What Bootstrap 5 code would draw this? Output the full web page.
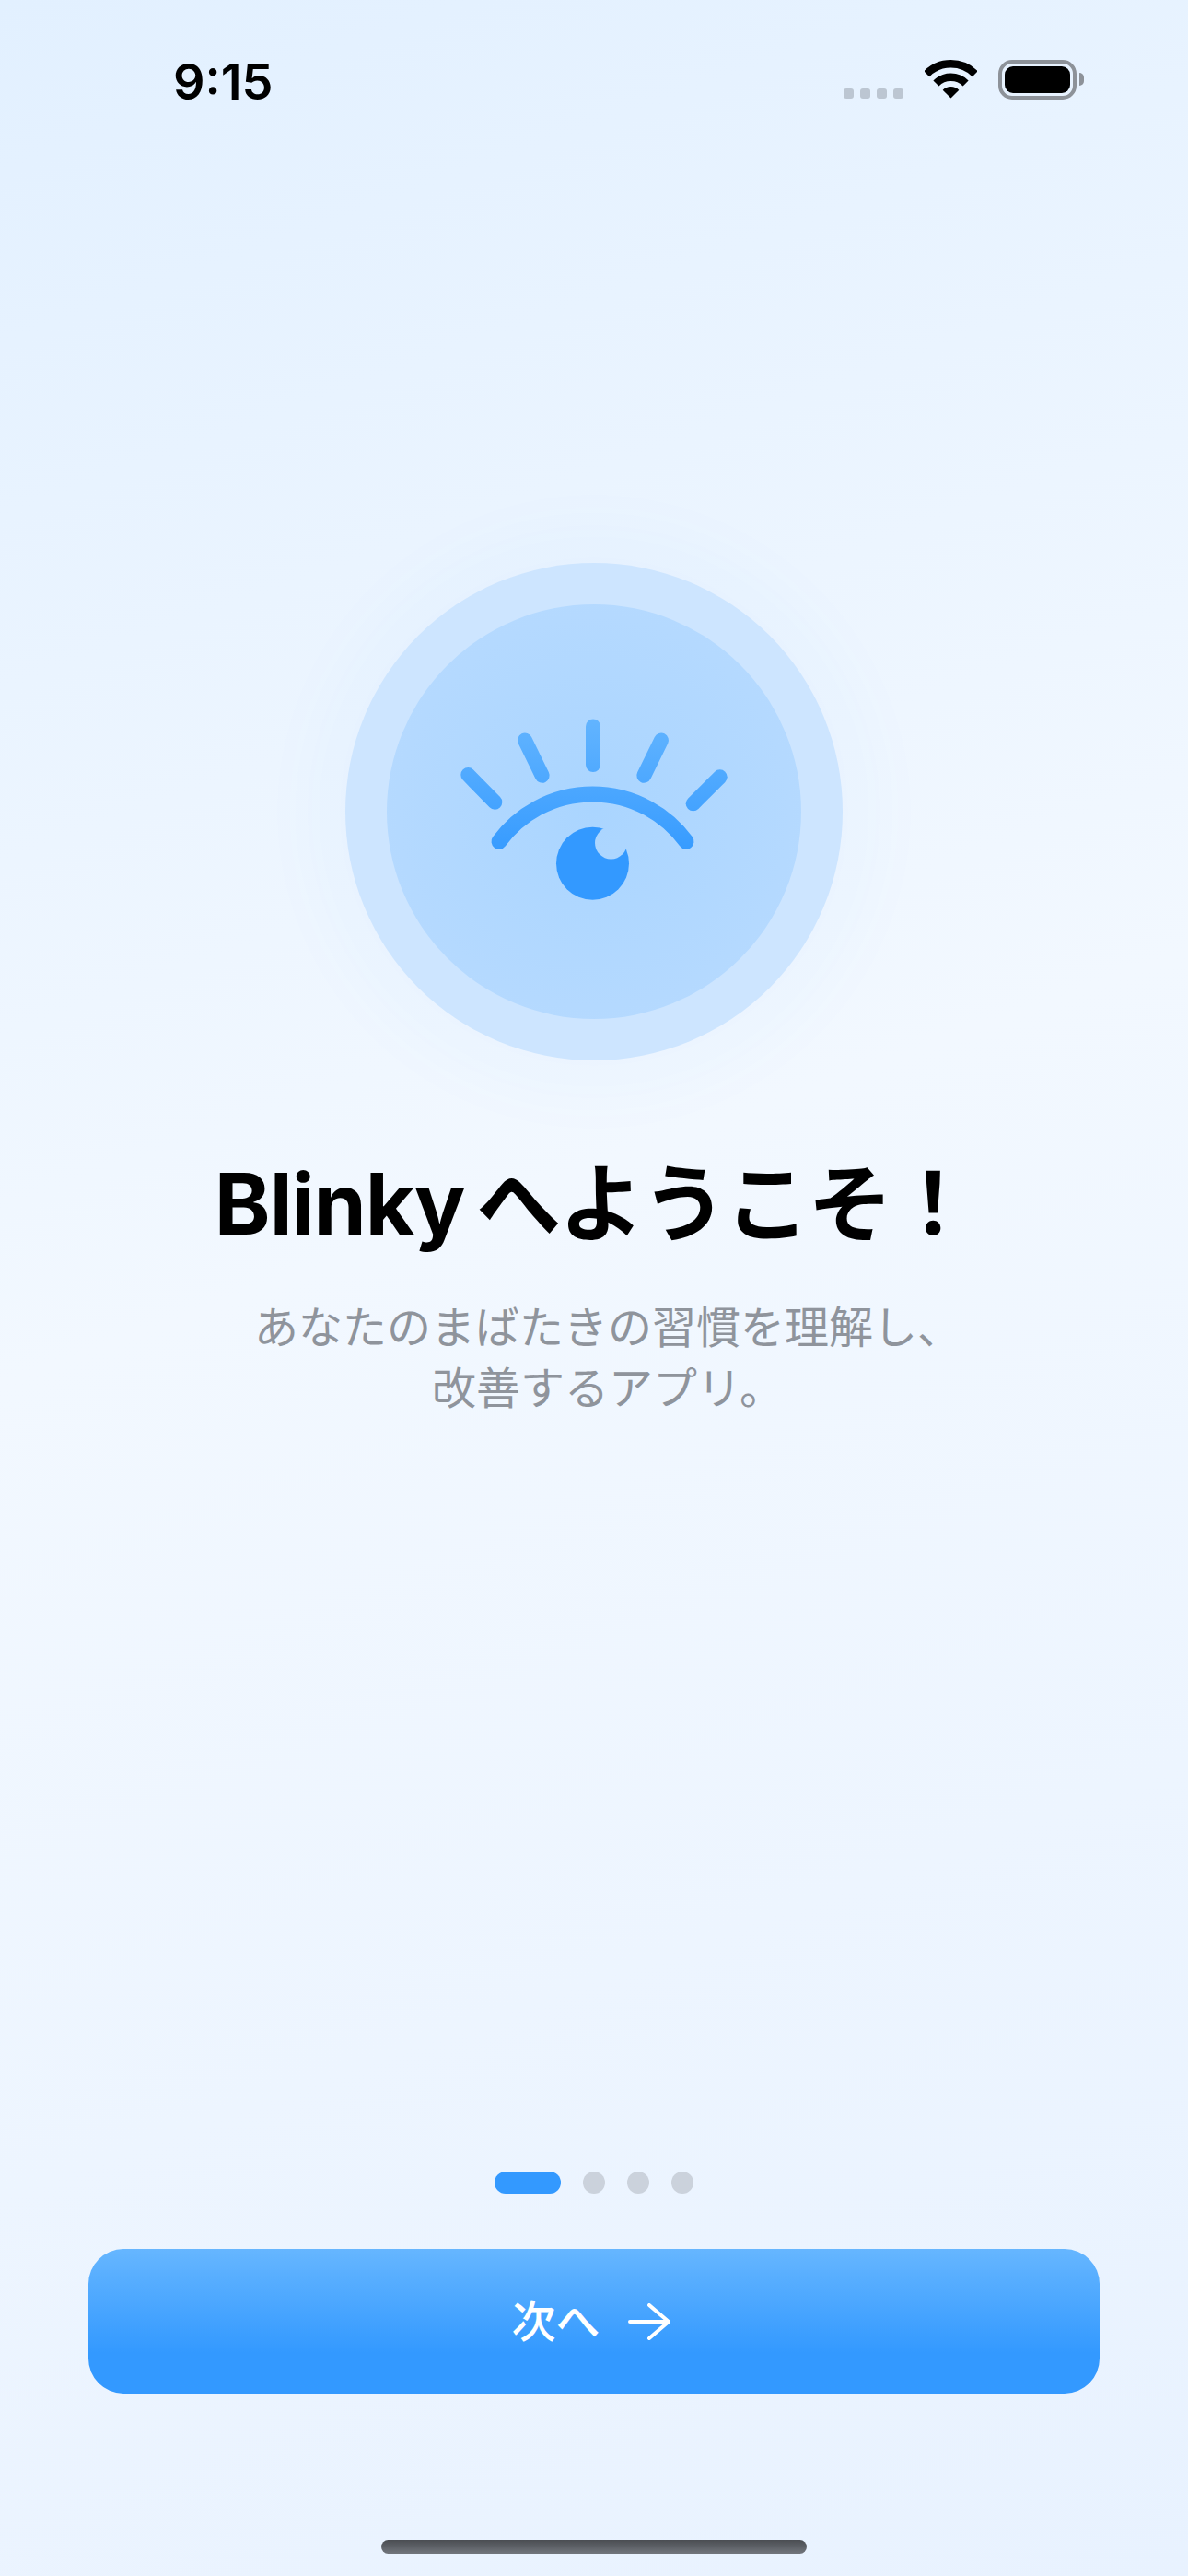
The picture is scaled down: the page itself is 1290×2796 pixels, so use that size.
<!DOCTYPE html>
<html lang="ja">
  <head>
    <meta charset="UTF-8" />
    <meta name="viewport" content="width=device-width, initial-scale=1.0" />
    <title>Blinky</title>
    <link
      href="https://cdn.jsdelivr.net/npm/bootstrap@5.3.1/dist/css/bootstrap.min.css"
      rel="stylesheet"
    />
    <style>
      body {
        font-family: Inter, "Noto Sans CJK JP", sans-serif;
        background: #eef5ff;
      }
      .screen {
        height: 2796px;
        background: linear-gradient(160deg, #e2f0ff 0%, #f2f8ff 46%, #e8f2ff 100%);
      }
      .status-row {
        height: 130px;
        padding: 67px 113px 0 188px;
      }
      .clock {
        font-size: 54px;
        font-weight: 600;
        line-height: 44px;
        color: #000;
      }
      .signal-dots {
        gap: 7px;
        margin-right: 23px;
        padding-top: 29px;
      }
      .signal-dots span {
        width: 11px;
        height: 11px;
        border-radius: 3px;
        background: #bcc6d2;
      }
      .wifi-icon {
        margin-top: -2px;
      }
      .battery {
        width: 85px;
        height: 43px;
        margin: -2px 0 0 23px;
        padding: 3px;
        border: 4px solid #8d9299;
        border-radius: 15px;
      }
      .battery-fill {
        background: #000;
        border-radius: 9px;
      }
      .battery-nub {
        width: 5px;
        height: 14px;
        margin: 12px 0 0 3px;
        background: #8d9299;
        border-radius: 0 5px 5px 0;
      }
      .halo {
        width: 540px;
        height: 540px;
        margin-top: 481px;
        background: #cde5ff;
        box-shadow: 0 0 90px 20px rgba(51, 153, 255, 0.04);
      }
      .halo-inner {
        width: 450px;
        height: 450px;
        background: radial-gradient(circle at 50% 50%, #aad5ff 0%, #b9dbff 100%);
      }
      .hero-title {
        margin: 94px 0 0;
        font-size: 92px;
        line-height: 124px;
        font-weight: 700;
        letter-spacing: -1px;
        word-spacing: -8px;
        color: #000;
      }
      .hero-title-ja {
        letter-spacing: -2px;
      }
      .hero-sub {
        margin: 39px 0 0;
        padding-left: 30px;
        font-size: 48px;
        line-height: 66px;
        font-weight: 400;
        color: #8f949c;
      }
      .pager {
        gap: 24px;
      }
      .pager span {
        width: 24px;
        height: 24px;
        border-radius: 12px;
        background: #cbd2dc;
      }
      .pager .pager-on {
        width: 72px;
        background: #3399ff;
      }
      .next-btn {
        width: 1098px;
        height: 157px;
        margin-top: 60px;
        padding: 0 6px 0 0;
        gap: 30px;
        border: 0;
        border-radius: 38px;
        font-size: 48px;
        font-weight: 500;
        color: #fff;
        background: linear-gradient(180deg, #66b6ff 0%, #3399ff 72%);
      }
      .home-bar {
        width: 462px;
        height: 15px;
        margin: 159px 0 24px;
        border-radius: 8px;
        background: linear-gradient(180deg, #4a4d52, #72767d);
      }
    </style>
  </head>
  <body class="m-0">
    <div class="screen d-flex flex-column align-items-center">
      <div class="status-row d-flex w-100 align-items-start">
        <div class="clock flex-grow-1">9:15</div>
        <div class="signal-dots d-flex">
          <span></span><span></span><span></span><span></span>
        </div>
        <svg class="wifi-icon" width="57" height="42" viewBox="0 0 57 42" fill="none" stroke="#000" stroke-width="8.5">
          <path d="M2.2 15.2A37.25 37.25 0 0 1 54.8 15.2" />
          <path d="M12.4 25.4A22.75 22.75 0 0 1 44.6 25.4" />
          <path d="M28.5 41.5L19.7 32.7A12.5 12.5 0 0 1 37.3 32.7Z" fill="#000" stroke="none" />
        </svg>
        <div class="battery d-flex">
          <div class="battery-fill flex-grow-1"></div>
        </div>
        <div class="battery-nub"></div>
      </div>

      <div class="halo rounded-circle d-flex align-items-center justify-content-center">
        <div class="halo-inner rounded-circle">
          <svg width="450" height="450" viewBox="0 0 450 450" fill="none">
            <defs>
              <linearGradient id="eyeGrad" gradientUnits="userSpaceOnUse" x1="0" y1="125" x2="0" y2="280">
                <stop offset="0" stop-color="#62b4ff" />
                <stop offset="1" stop-color="#3399ff" />
              </linearGradient>
              <mask id="pupilCut" maskUnits="userSpaceOnUse" x="0" y="0" width="450" height="450">
                <rect width="450" height="450" fill="#fff" />
                <circle cx="243.5" cy="259" r="17.5" fill="#000" />
              </mask>
            </defs>
            <g stroke="url(#eyeGrad)" stroke-width="16" stroke-linecap="round">
              <path d="M224 132.5V174" />
              <path d="M150 147.5L168.7 185.7" />
              <path d="M298 147.5L279.3 185.7" />
              <path d="M88.3 185L117.3 214.7" />
              <path d="M361.7 187.3L332.7 216.3" />
              <path d="M122 257.3A126 126 0 0 1 325 257.3" stroke-width="17" />
            </g>
            <circle cx="223.5" cy="281.3" r="39.5" fill="#3399ff" mask="url(#pupilCut)" />
          </svg>
        </div>
      </div>

      <h1 class="hero-title text-center">Blinky <span class="hero-title-ja">へようこそ！</span></h1>
      <p class="hero-sub text-center">あなたのまばたきの習慣を理解し、<br />改善するアプリ。</p>

      <div class="pager d-flex mt-auto">
        <span class="pager-on"></span><span></span><span></span><span></span>
      </div>
      <button class="next-btn btn d-flex align-items-center justify-content-center" type="button">
        <span>次へ</span>
        <svg width="47" height="40" viewBox="0 0 47 40" fill="none" stroke="#fff" stroke-width="4" stroke-linecap="round" stroke-linejoin="round">
          <path d="M2 20H44M23 2L44 20L23 38" />
        </svg>
      </button>
      <div class="home-bar"></div>
    </div>
    <script src="https://cdn.jsdelivr.net/npm/bootstrap@5.3.1/dist/js/bootstrap.bundle.min.js"></script>
  </body>
</html>
